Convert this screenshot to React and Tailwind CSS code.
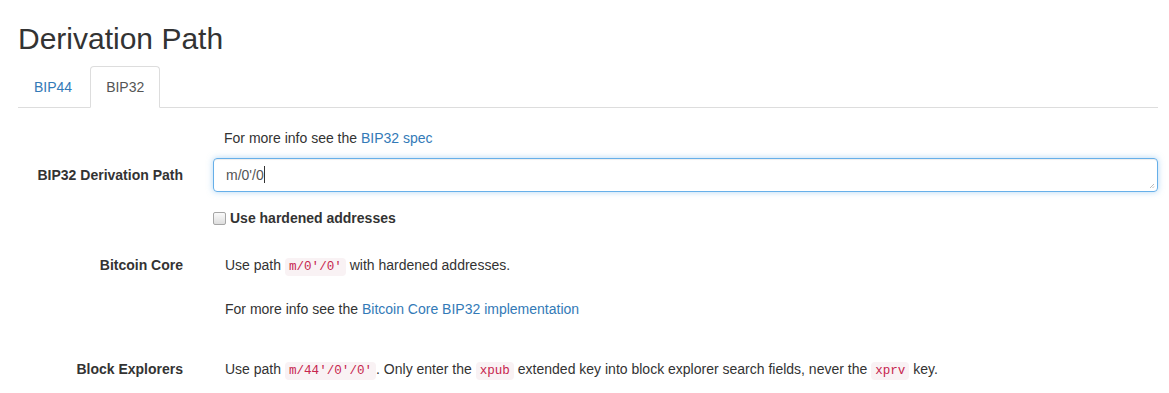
import React from 'react';

const Code = ({ children }) => (
  <code className="font-['Liberation_Mono',monospace] text-[12.6px] px-[4px] py-[2px] text-[#c7254e] bg-[#f9f2f4] rounded">
    {children}
  </code>
);

const Link = ({ children }) => (
  <a href="#" className="text-[#337ab7] no-underline">
    {children}
  </a>
);

function Row({ label, children, className = '' }) {
  return (
    <div className={`flex gap-[30px] ${className}`}>
      <div className="w-[165px] shrink-0 text-right font-bold leading-5">{label}</div>
      <div className="flex-1 min-w-0">{children}</div>
    </div>
  );
}

function App() {
  return (
    <div className="min-h-[393px] bg-white text-[#333] text-[14px] leading-5 font-['Liberation_Sans',Arial,sans-serif] pl-[18px] pr-[11px] pt-[22px]">
      <h2 className="text-[30px] leading-[33px] font-normal">Derivation Path</h2>

      <ul className="mt-[11px] flex border-b border-[#ddd]">
        <li className="mr-[2px] -mb-px">
          <a href="#" className="block px-[15px] py-[10px] leading-5 border border-transparent rounded-t text-[#337ab7]">
            BIP44
          </a>
        </li>
        <li className="-mb-px">
          <a href="#" className="block px-[15px] py-[10px] leading-5 border border-[#ddd] border-b-white bg-white rounded-t text-[#555]">
            BIP32
          </a>
        </li>
      </ul>

      <Row label="" className="mt-[20px]">
        <p className="pl-[11px]">
          For more info see the <Link>BIP32 spec</Link>
        </p>
      </Row>

      <Row label={<span className="block pt-[7px]">BIP32 Derivation Path</span>} className="mt-[10px]">
        <div className="relative h-[34px] border border-[#66afe9] rounded-[4px] px-[12px] py-[6px] shadow-[inset_0_1px_1px_rgba(0,0,0,0.075),0_0_6px_rgba(102,175,233,0.5)] text-[#555]">
          <span>m/0'/0</span>
          <span className="inline-block w-px h-[17px] bg-[#333] align-[-3px]"></span>
          <svg className="absolute right-[2px] bottom-[2px]" width="6" height="6" viewBox="0 0 6 6">
            <path d="M5 1L1 5M5 3.5L3.5 5" stroke="#bbb" strokeWidth="1" />
          </svg>
        </div>
      </Row>

      <Row label="" className="mt-[16px]">
        <label className="flex items-center font-bold">
          <span className="inline-block w-[13px] h-[13px] mr-[4px] border border-[#a6a6a6] rounded-[2px] bg-gradient-to-b from-[#fafafa] to-[#dedede]"></span>
          Use hardened addresses
        </label>
      </Row>

      <Row label="Bitcoin Core" className="mt-[27px]">
        <p className="pl-[12px]">
          Use path <Code>m/0'/0'</Code> with hardened addresses.
        </p>
        <p className="pl-[12px] mt-[22px]">
          For more info see the <Link>Bitcoin Core BIP32 implementation</Link>
        </p>
      </Row>

      <Row label="Block Explorers" className="mt-[40px]">
        <p className="pl-[12px]">
          Use path <Code>m/44'/0'/0'</Code>. Only enter the <Code>xpub</Code> extended key into block explorer search fields, never the <Code>xprv</Code> key.
        </p>
      </Row>
    </div>
  );
}

export default App;
